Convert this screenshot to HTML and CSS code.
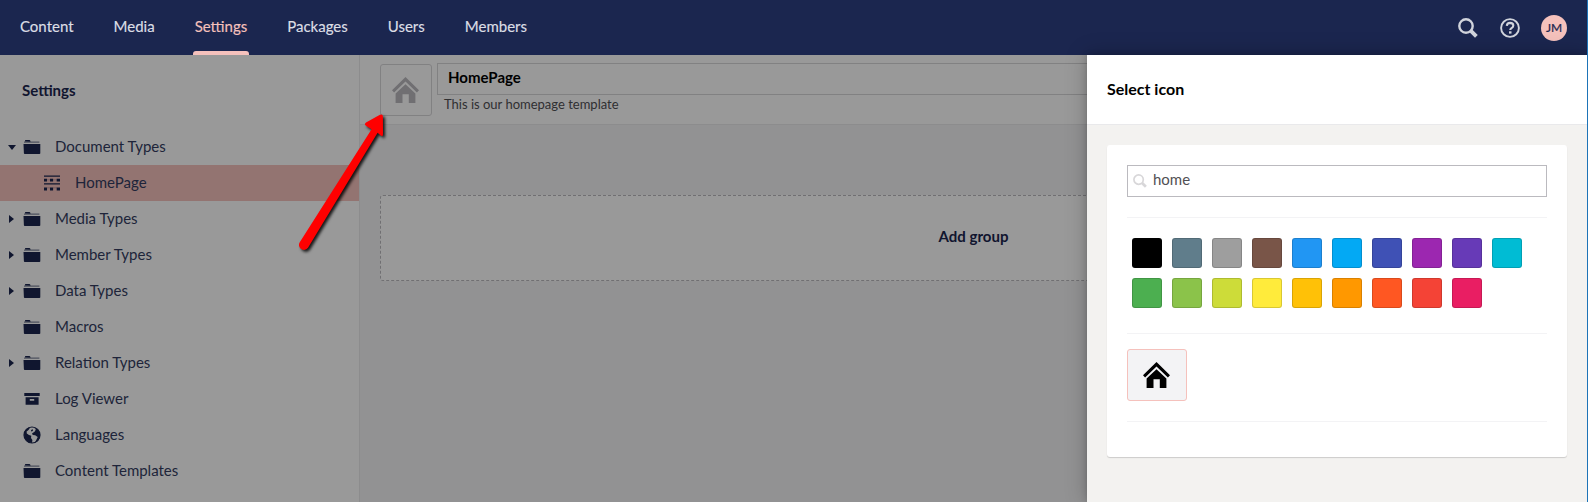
FILE: index.html
```html
<!DOCTYPE html>
<html lang="en">
<head>
<meta charset="utf-8">
<title>Settings</title>
<link rel="stylesheet" href="styles.css">
</head>
<body>
<svg class="defs" aria-hidden="true">
  <symbol id="folder" viewBox="0 0 18 16"><path d="M2 2.6H16.4V3.6H1V2.6Z" opacity=".7"/><path d="M2 2.6V1.6Q2 1 2.6 1H6.4Q7 1 7.2 1.6L7.6 2.8Z"/><path d="M.5 5H17.3V14.2Q17.3 15 16.4 15H1.8Q.9 15 .9 14.2Z"/></symbol>
  <symbol id="house" viewBox="0 0 27 26"><path d="M13.5 0 27 13.3 24.9 15.6 13.5 4.6 2.1 15.6 0 13.3Z"/><path d="M13.5 7.2 23.4 16.6V26H16.8V17.3H10.5V26H3.6V16.6Z"/></symbol>
  <symbol id="search" viewBox="0 0 20 20"><circle cx="8" cy="8" r="6.7" fill="none" stroke="currentColor" stroke-width="2.4"/><path d="M12.6 12.6 18.4 18.3" stroke="currentColor" stroke-width="3.9" stroke-linecap="butt"/></symbol>
</svg>
<div class="app">
  <header class="topbar">
    <nav class="nav">
      <a class="nav-item">Content</a><a class="nav-item">Media</a><a class="nav-item active">Settings</a><a class="nav-item">Packages</a><a class="nav-item">Users</a><a class="nav-item">Members</a>
    </nav>
    <div class="tools">
      <svg class="tool"><use href="#search"/></svg>
      <svg class="tool" viewBox="0 0 20 20"><circle cx="10" cy="10" r="8.9" fill="none" stroke="currentColor" stroke-width="1.9"/><path d="M6.8 7.9Q7 4.9 10.1 4.9 13.3 5 13.3 7.5 13.3 9 11.5 10.1 10.3 10.8 10.2 12" fill="none" stroke="currentColor" stroke-width="2.1"/><path d="M9 13.3H11.5V15.6H9Z"/></svg>
      <span class="avatar">JM</span>
    </div>
  </header>
  <div class="body">
    <aside class="sidebar">
      <h2 class="side-title">Settings</h2>
      <ul class="tree">
        <li class="row"><i class="caret open"></i><svg class="ico"><use href="#folder"/></svg><span>Document Types</span></li>
        <li class="row child"><i class="caret none"></i><svg class="ico" viewBox="0 0 18 16"><path d="M1 .5H17V1.7H1ZM1 8.2H17V9.4H1ZM1 3.8H4V6.6H1ZM7 3.8H10.1V6.6H7ZM13.7 3.8H17V6.6H13.7ZM1 12.4H4V15.5H1ZM7 12.4H10.1V15.5H7ZM13.7 12.4H17V15.5H13.7Z"/><path d="M4 4.4H7V5.2H4ZM10 4.4H14V5.2H10ZM4 12.4H7V13.2H4ZM10 12.4H14V13.2H10Z" opacity=".3"/></svg><span>HomePage</span></li>
        <li class="row"><i class="caret"></i><svg class="ico"><use href="#folder"/></svg><span>Media Types</span></li>
        <li class="row"><i class="caret"></i><svg class="ico"><use href="#folder"/></svg><span>Member Types</span></li>
        <li class="row"><i class="caret"></i><svg class="ico"><use href="#folder"/></svg><span>Data Types</span></li>
        <li class="row"><i class="caret none"></i><svg class="ico"><use href="#folder"/></svg><span>Macros</span></li>
        <li class="row"><i class="caret"></i><svg class="ico"><use href="#folder"/></svg><span>Relation Types</span></li>
        <li class="row"><i class="caret none"></i><svg class="ico" viewBox="0 0 18 16"><path d="M1.3 2H16.7V5H1.3ZM2.6 6.2H15.6V13.7H2.6ZM6.8 8V9.8H11.2V8Z" fill-rule="evenodd"/></svg><span>Log Viewer</span></li>
        <li class="row"><i class="caret none"></i><svg class="ico globe" viewBox="0 0 18 18"><circle cx="9" cy="9" r="8" fill="none" stroke="currentColor" stroke-width="1.2"/><path d="M3.4 3.2 5.8 1.4 7.2 1.5 5.5 4 3.6 5.6 3.8 7.6 6 9 8.3 9.8 8 12 9.4 14 9 17 5 16 2 13 1 9 1.5 5.8ZM11 1.4 15 3.6 17 7.5 17 11.5 15 15 12 16.6 13.5 13.4 14.7 11 12.2 9.2 9.8 8.9 9 7.4 11.8 5.4 12.8 3.4Z"/><path d="M8 4 10 3.2 9.8 5 8.2 5.6Z"/></svg><span>Languages</span></li>
        <li class="row"><i class="caret none"></i><svg class="ico"><use href="#folder"/></svg><span>Content Templates</span></li>
      </ul>
    </aside>
    <main class="editor">
      <div class="editor-head">
        <div class="icon-btn"><svg><use href="#house"/></svg></div>
        <div class="fields"><div class="name">HomePage</div><div class="desc">This is our homepage template</div></div>
      </div>
      <div class="editor-body"><div class="add-group">Add group</div></div>
    </main>
    <div class="backdrop"></div>
    <section class="panel">
      <div class="panel-head">Select icon</div>
      <div class="panel-body">
        <div class="card">
          <div class="search"><svg><use href="#search"/></svg><span>home</span></div>
          <div class="swatches">
            <i class="sw black"></i><i class="sw bluegrey"></i><i class="sw grey"></i><i class="sw brown"></i><i class="sw blue"></i><i class="sw lightblue"></i><i class="sw indigo"></i><i class="sw purple"></i><i class="sw deeppurple"></i><i class="sw cyan"></i><i class="sw green"></i><i class="sw lightgreen"></i><i class="sw lime"></i><i class="sw yellow"></i><i class="sw amber"></i><i class="sw orange"></i><i class="sw deeporange"></i><i class="sw red"></i><i class="sw pink"></i>
          </div>
          <div class="results"><div class="result"><svg><use href="#house"/></svg></div></div>
        </div>
      </div>
    </section>
  </div>
  <svg class="arrow" viewBox="0 0 110 160"><path d="M92.9 12.5Q92.9 9.5 90 10.8L76 18.6Q73.6 20.6 76.3 21.9L81.6 25.2 9.6 138.4A5 5 0 0 0 18 143.8L87.6 28.8 91 31.8Q93 33.2 93 30.1Z"/></svg>
  <div class="edge"></div>
</div>
</body>
</html>
```
FILE: styles.css
```css
* { box-sizing: border-box; }
body { margin: 0; font-family: Lato, "Liberation Sans", sans-serif; font-size: 15px; color: #1b264f; }
svg { fill: currentColor; flex: none; }
.defs { position: absolute; width: 0; height: 0; }
.app { position: relative; width: 1588px; height: 502px; overflow: hidden; display: flex; flex-direction: column; }
.topbar { height: 55px; background: #1b264f; display: flex; justify-content: space-between; flex: none; }
.nav { display: flex; }
.nav-item { position: relative; padding: 0 20px; line-height: 52px; font-size: 15px; font-weight: 400; color: #dcdee5; -webkit-text-stroke: .15px; }
.nav-item.active { color: #f5c1bc; }
.nav-item.active::after { content: ""; position: absolute; left: 18px; right: 18px; bottom: 0; height: 4px; background: #f5c1bc; border-radius: 3px 3px 0 0; }
.tools { display: flex; align-items: center; padding: 1px 21px 0 0; color: #d1d4dc; }
.tool { width: 20px; height: 20px; margin-right: 22px; }
.tool + .tool { margin-right: 21px; }
.avatar { width: 26px; height: 26px; border-radius: 50%; background: #f5c1bc; color: #1b264f; font-size: 12px; font-weight: 400; -webkit-text-stroke: .2px; line-height: 25px; text-align: center; }
.body { position: relative; flex: 1; display: flex; min-height: 0; }
.sidebar { width: 360px; flex: none; border-right: 1px solid #e9e9eb; background: #fff; }
.side-title { margin: 0; padding: 0 22px; height: 74px; line-height: 70px; font-size: 15px; font-weight: 700; }
.tree { list-style: none; margin: 0; padding: 0; }
.row { height: 36px; display: flex; align-items: center; padding-left: 8px; font-size: 15px; }
.row span { padding-bottom: 3px; color: #343d62; }
.row.child { padding-left: 28px; background: #f5c1bc; }
.caret { width: 15px; flex: none; }
.caret::before { content: ""; display: block; width: 0; margin-left: 1px; border: solid transparent; border-width: 4px 0 4px 5px; border-left-color: #1b264f; }
.caret.open::before { margin-left: 0; border-width: 5px 4px 0; border-color: #1b264f transparent transparent; }
.caret.none::before { display: none; }
.ico { width: 18px; height: 16px; margin-right: 14px; }
.ico.globe { height: 18px; }
.editor { flex: 1; display: flex; flex-direction: column; background: #f3f3f5; }
.editor-head { height: 70px; padding: 8px 20px 0; display: flex; background: #fff; border-bottom: 1px solid #e9e9eb; }
.icon-btn { width: 52px; height: 52px; margin: 1px 5px 0 0; border: 1px solid #d8d7d9; border-radius: 3px; color: #bbbabf; display: flex; align-items: center; justify-content: center; }
.icon-btn svg { width: 27px; height: 26px; margin-right: 1px; }
.fields { flex: 1; }
.name { height: 32px; border: 1px solid #d8d7d9; padding-left: 10px; line-height: 27px; color: #000; font-size: 15px; font-weight: 700; }
.desc { padding-left: 7px; font-size: 13px; line-height: 19px; color: #515054; }
.editor-body { flex: 1; padding: 70px 21px 0 20px; }
.add-group { height: 86px; border: 1px dashed #bbbabf; border-radius: 3px; background: #fff; text-align: center; font-weight: 700; line-height: 81px; }
.backdrop { position: absolute; inset: 0; background: rgba(0, 0, 0, .4); }
.panel { position: absolute; top: 0; right: 1px; width: 500px; bottom: 0; display: flex; flex-direction: column; background: #f3f2f0; box-shadow: 0 0 20px rgba(0, 0, 0, .25), 0 0 6px rgba(0, 0, 0, .16); }
.panel-head { height: 70px; background: #fff; border-bottom: 1px solid #e9e9eb; padding-left: 20px; line-height: 68px; font-size: 16px; font-weight: 700; color: #000; }
.panel-body { padding: 20px; }
.card { height: 312px; padding: 20px; background: #fff; border-radius: 3px; box-shadow: 0 1px 1px rgba(0, 0, 0, .16); }
.search { height: 32px; border: 1px solid #bbbabf; display: flex; align-items: center; padding: 0 0 2px 5px; color: #515054; }
.search span { padding-bottom: 2px; }
.search svg { width: 14px; height: 14px; margin: 1px 6px 0 0; color: #d8d7d9; }
.swatches { margin-top: 20px; height: 117px; border: solid #f3f3f5; border-width: 1px 0; padding: 20px 0 0 5px; display: flex; flex-wrap: wrap; align-content: flex-start; gap: 10px; }
.sw { width: 30px; height: 30px; border-radius: 3px; border: 1px solid rgba(0, 0, 0, .15); }
.black { background: #000; }
.bluegrey { background: #607d8b; }
.grey { background: #9e9e9e; }
.brown { background: #795548; }
.blue { background: #2196f3; }
.lightblue { background: #03a9f4; }
.indigo { background: #3f51b5; }
.purple { background: #9c27b0; }
.deeppurple { background: #673ab7; }
.cyan { background: #00bcd4; }
.green { background: #4caf50; }
.lightgreen { background: #8bc34a; }
.lime { background: #cddc39; }
.yellow { background: #ffeb3b; }
.amber { background: #ffc107; }
.orange { background: #ff9800; }
.deeporange { background: #ff5722; }
.red { background: #f44336; }
.pink { background: #e91e63; }
.results { padding: 15px 0 20px; border-bottom: 1px solid #f3f3f5; }
.result { width: 60px; height: 52px; border: 1px solid #f5c1bc; border-radius: 3px; background: #f3f3f5; color: #000; display: flex; align-items: center; justify-content: center; }
.result svg { width: 27px; height: 26px; margin-right: 1px; }
.arrow { position: absolute; left: 290px; top: 104px; width: 110px; height: 160px; fill: #f00; filter: drop-shadow(2px 2px 1.5px rgba(0, 0, 0, .85)); }
.edge { position: absolute; right: 0; top: 0; bottom: 0; width: 1px; background: #1d74b8; }
```
